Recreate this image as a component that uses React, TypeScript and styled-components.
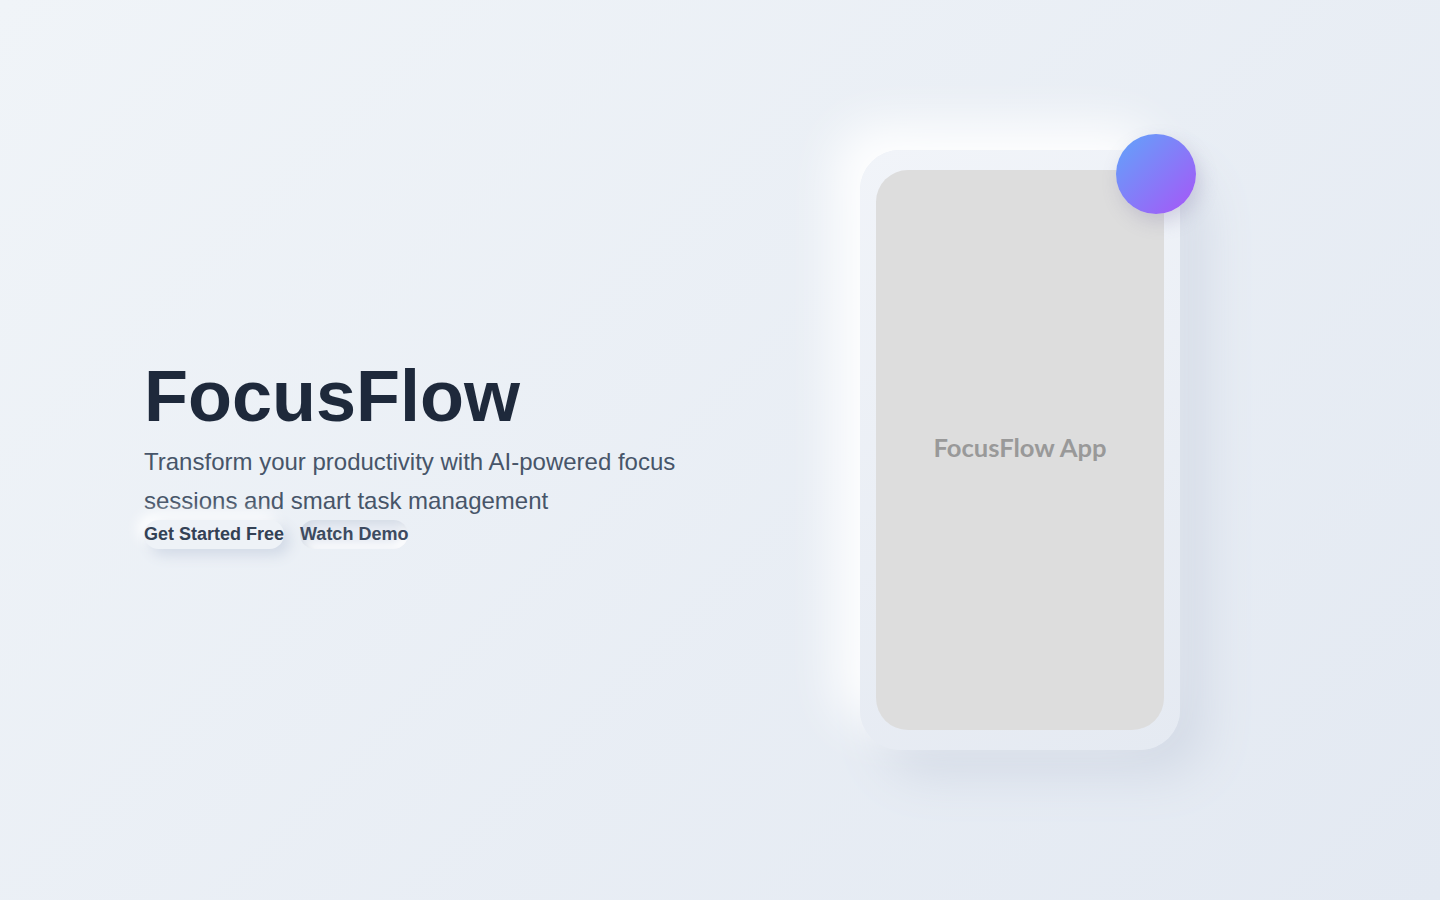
import React from "react";
import styled, { createGlobalStyle } from "styled-components";

const GlobalStyle = createGlobalStyle`
  * { box-sizing: border-box; margin: 0; padding: 0; }
  html, body { height: 100%; }
  body {
    font-family: "Liberation Sans", Arial, sans-serif;
    line-height: 1.6;
    background: linear-gradient(135deg, #f0f4f8 0%, #e3e9f2 100%);
    min-height: 100vh;
    overflow: hidden;
  }
`;

const Hero = styled.section`
  height: 900px;
  display: grid;
  grid-template-columns: 1fr 1fr;
  gap: 48px;
  align-items: center;
  padding: 0 144px;
`;

const Copy = styled.div`
  display: flex;
  flex-direction: column;
  padding-top: 2px;
`;

const Title = styled.h1`
  font-size: 72px;
  font-weight: 700;
  line-height: 1.2;
  color: #1e293b;
`;

const Subtitle = styled.p`
  margin-top: 4px;
  font-size: 24px;
  line-height: 1.6;
  color: #475569;
`;

const Actions = styled.div`
  display: flex;
  gap: 16px;
`;

const Button = styled.button<{ $pressed?: boolean }>`
  font: inherit;
  font-size: 18px;
  font-weight: 700;
  line-height: 1.6;
  padding: 0;
  border: none;
  border-radius: 50px;
  cursor: pointer;
  color: ${(p) => (p.$pressed ? "#3d4a60" : "#334155")};
  background: ${(p) => (p.$pressed ? "#e9edf4" : "#eef2f7")};
  box-shadow: ${(p) =>
    p.$pressed
      ? "inset 4px 4px 8px #d4dbe6, inset -4px -4px 8px #ffffff"
      : "6px 6px 14px #d1d9e6, -6px -6px 14px #ffffff"};
`;

const Visual = styled.div`
  display: flex;
  justify-content: center;
  align-items: center;
`;

const Phone = styled.div`
  position: relative;
  width: 320px;
  height: 600px;
  padding: 20px 16px;
  border-radius: 40px;
  background: linear-gradient(160deg, #f1f4f9 0%, #e5eaf2 100%);
  box-shadow: -24px -24px 50px #ffffff, 24px 24px 50px #d3dae6;
`;

const Screen = styled.div`
  width: 100%;
  height: 100%;
  border-radius: 32px;
  background: #dddddd;
  display: flex;
  align-items: center;
  justify-content: center;
  padding-bottom: 5px;
`;

const ScreenLabel = styled.span`
  font-family: Lato, "Open Sans", sans-serif;
  font-weight: 700;
  font-size: 25.6px;
  color: #999999;
`;

const Orb = styled.div`
  position: absolute;
  top: -16px;
  right: -16px;
  width: 80px;
  height: 80px;
  border-radius: 50%;
  background: linear-gradient(135deg, #60a5fa 0%, #a855f7 100%);
  box-shadow: 4px 8px 18px rgba(120, 110, 160, 0.25);
`;

export default function App() {
  return (
    <>
      <GlobalStyle />
      <Hero>
        <Copy>
          <Title>FocusFlow</Title>
          <Subtitle>
            Transform your productivity with AI-powered focus sessions and smart task management
          </Subtitle>
          <Actions>
            <Button>Get Started Free</Button>
            <Button $pressed>Watch Demo</Button>
          </Actions>
        </Copy>
        <Visual>
          <Phone>
            <Screen>
              <ScreenLabel>FocusFlow App</ScreenLabel>
            </Screen>
            <Orb />
          </Phone>
        </Visual>
      </Hero>
    </>
  );
}
